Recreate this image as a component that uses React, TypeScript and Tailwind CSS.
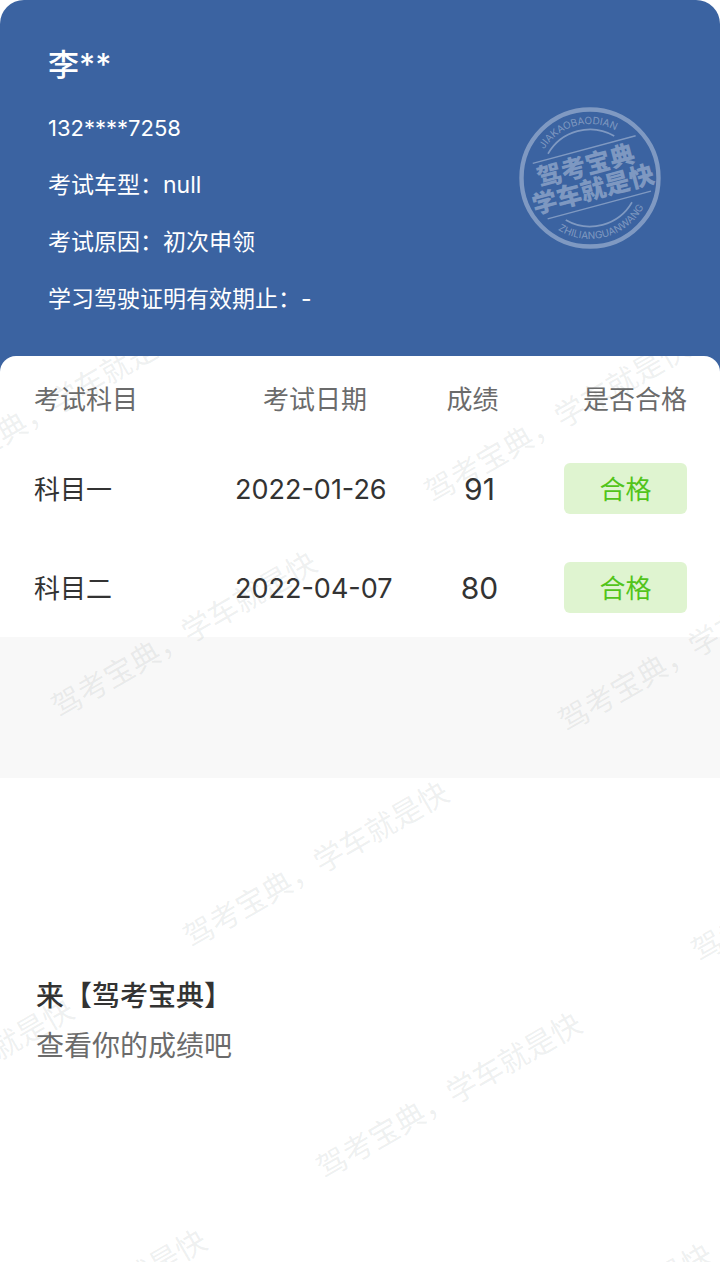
interface ExamResult {
  subject: string;
  date: string;
  score: number;
  status: string;
}

const results: ExamResult[] = [
  { subject: "科目一", date: "2022-01-26", score: 91, status: "合格" },
  { subject: "科目二", date: "2022-04-07", score: 80, status: "合格" },
];

const details = ["考试车型：null", "考试原因：初次申领", "学习驾驶证明有效期止：-"];

// start points of the slanted watermark lines, relative to the sheet
const watermarks = [
  [-66, 117],
  [440, 131],
  [67, 346],
  [574, 360],
  [199, 576],
  [707, 590],
  [-176, 793],
  [332, 807],
  [-43, 1024],
  [463, 1038],
];

function Seal() {
  return (
    <svg
      viewBox="-71 -71 142 142"
      className="mt-[74px] size-[142px] shrink-0 self-start text-white/35"
      fill="none"
      stroke="currentColor"
      aria-hidden="true"
    >
      <defs>
        <path id="seal-top" d="M-54 0A54 54 0 0 1 54 0" />
        <path id="seal-bottom" d="M-61 0A61 61 0 0 0 61 0" />
      </defs>
      <circle r="68.5" strokeWidth="4.4" />
      <g transform="rotate(-15)">
        <path d="M-34.3-34.3A48.5 48.5 0 0 1 34.3-34.3" strokeWidth="1.6" />
        <path d="M-34.3 34.3A48.5 48.5 0 0 0 34.3 34.3" strokeWidth="1.6" />
        <path d="M-51.5-29H55M-51.5 28.5H55.5" strokeWidth="1.4" />
        <g fill="currentColor" stroke="none" textAnchor="middle">
          <text fontSize="25" fontWeight="900" x="-1" y="-4">驾考宝典</text>
          <text fontSize="25" fontWeight="900" x="0" y="21">学车就是快</text>
          <text fontSize="10">
            <textPath href="#seal-top" startOffset="50%">JIAKAOBAODIAN</textPath>
          </text>
          <text fontSize="10">
            <textPath href="#seal-bottom" startOffset="50%">ZHILIANGUANWANG</textPath>
          </text>
        </g>
      </g>
    </svg>
  );
}

function Watermark() {
  return (
    <svg
      className="pointer-events-none absolute inset-0 h-full w-full text-[#5a6b6b]/10"
      fill="currentColor"
      fontSize="30"
      aria-hidden="true"
    >
      {watermarks.map(([x, y]) => (
        <text key={`${x},${y}`} x="-15" y="11" transform={`translate(${x} ${y}) rotate(-30)`}>
          驾考宝典，学车就是快
        </text>
      ))}
    </svg>
  );
}

export default function App() {
  return (
    <main className="flex min-h-screen flex-col bg-white font-[Inter,'Noto_Sans_CJK_SC',sans-serif]">
      <header className="flex items-center justify-between rounded-t-3xl bg-[#3b63a1] pt-[33px] pr-[59px] pb-11 pl-12 text-white">
        <div>
          <h1 className="pb-[3px] text-[31px] leading-16 font-medium">李**</h1>
          <p className="text-[22px] leading-[57px]">132****7258</p>
          {details.map((line) => (
            <p key={line} className="text-[23px] leading-[57px]">{line}</p>
          ))}
        </div>
        <Seal />
      </header>

      <div className="relative -mt-4 flex-1 overflow-hidden rounded-t-2xl bg-white">
        <table className="w-full table-fixed text-[26px] text-[#333]">
          <thead>
            <tr className="h-[83px] text-[#6b6b6b]">
              <th className="pt-[3px] pl-[34px] text-left font-normal">考试科目</th>
              <th className="w-40 pt-[3px] font-normal">考试日期</th>
              <th className="w-[169px] pt-[3px] pr-[14px] font-normal">成绩</th>
              <th className="w-[156px] pt-[3px] pr-[33px] font-normal whitespace-nowrap">
                <div className="flex justify-end">是否合格</div>
              </th>
            </tr>
          </thead>
          <tbody>
            {results.map((result) => (
              <tr key={result.subject} className="h-[99px]">
                <td className="pt-[2px] pl-[34px]">{result.subject}</td>
                <td className="pt-[3px] text-[27px] whitespace-nowrap">{result.date}</td>
                <td className="pt-[2px] text-center text-[30px]">{result.score}</td>
                <td className="pr-[33px]">
                  <div className="rounded-md bg-[#dff4d0] pt-[2px] text-center leading-[49px] text-[#52c41a]">
                    {result.status}
                  </div>
                </td>
              </tr>
            ))}
          </tbody>
        </table>

        <div className="h-[141px] bg-[#f8f8f8]" />

        <section className="px-9 pt-[193px] text-[28px] leading-[50px]">
          <h2 className="font-medium text-[#333]">来【驾考宝典】</h2>
          <p className="text-[#6b6b6b]">查看你的成绩吧</p>
        </section>

        <Watermark />
      </div>
    </main>
  );
}
